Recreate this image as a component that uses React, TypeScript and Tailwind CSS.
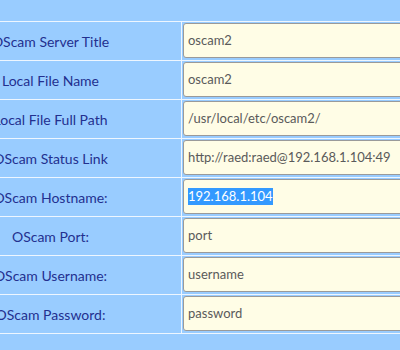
const rows = [
  { label: "OScam Server Title", value: "oscam2" },
  { label: "Local File Name", value: "oscam2" },
  { label: "Local File Full Path", value: "/usr/local/etc/oscam2/" },
  { label: "OScam Status Link", value: "http://raed:raed@192.168.1.104:49" },
  { label: "OScam Hostname:", value: "192.168.1.104", selected: true },
  { label: "OScam Port:", value: "port" },
  { label: "OScam Username:", value: "username" },
  { label: "OScam Password:", value: "password" },
];

export default function App() {
  return (
    <div className="h-[350px] w-[400px] overflow-hidden bg-[#99ccff] font-['Lato',sans-serif]">
      <div className="h-[21px]" />
      <div className="-ml-[80px] w-[700px] border-b border-[#eef6ff]">
        {rows.map((r) => (
          <div key={r.label} className="flex h-[39px] border-t border-[#eef6ff]">
            <div className="flex w-[262px] shrink-0 items-center justify-center border-r border-[#eef6ff] text-[14px] text-[#23308f] whitespace-nowrap">
              {r.label}
            </div>
            <div className="flex-1 pl-px pt-px pb-[2px]">
              <div className="flex h-full items-center rounded-[3px] border border-[#9a9a9a] bg-[#fffde6] px-1 text-[13px] text-[#5a5a5a] whitespace-nowrap">
                {r.selected ? (
                  <span className="bg-[#3399ff] text-white leading-[17px]">{r.value}</span>
                ) : (
                  r.value
                )}
              </div>
            </div>
          </div>
        ))}
      </div>
    </div>
  );
}
